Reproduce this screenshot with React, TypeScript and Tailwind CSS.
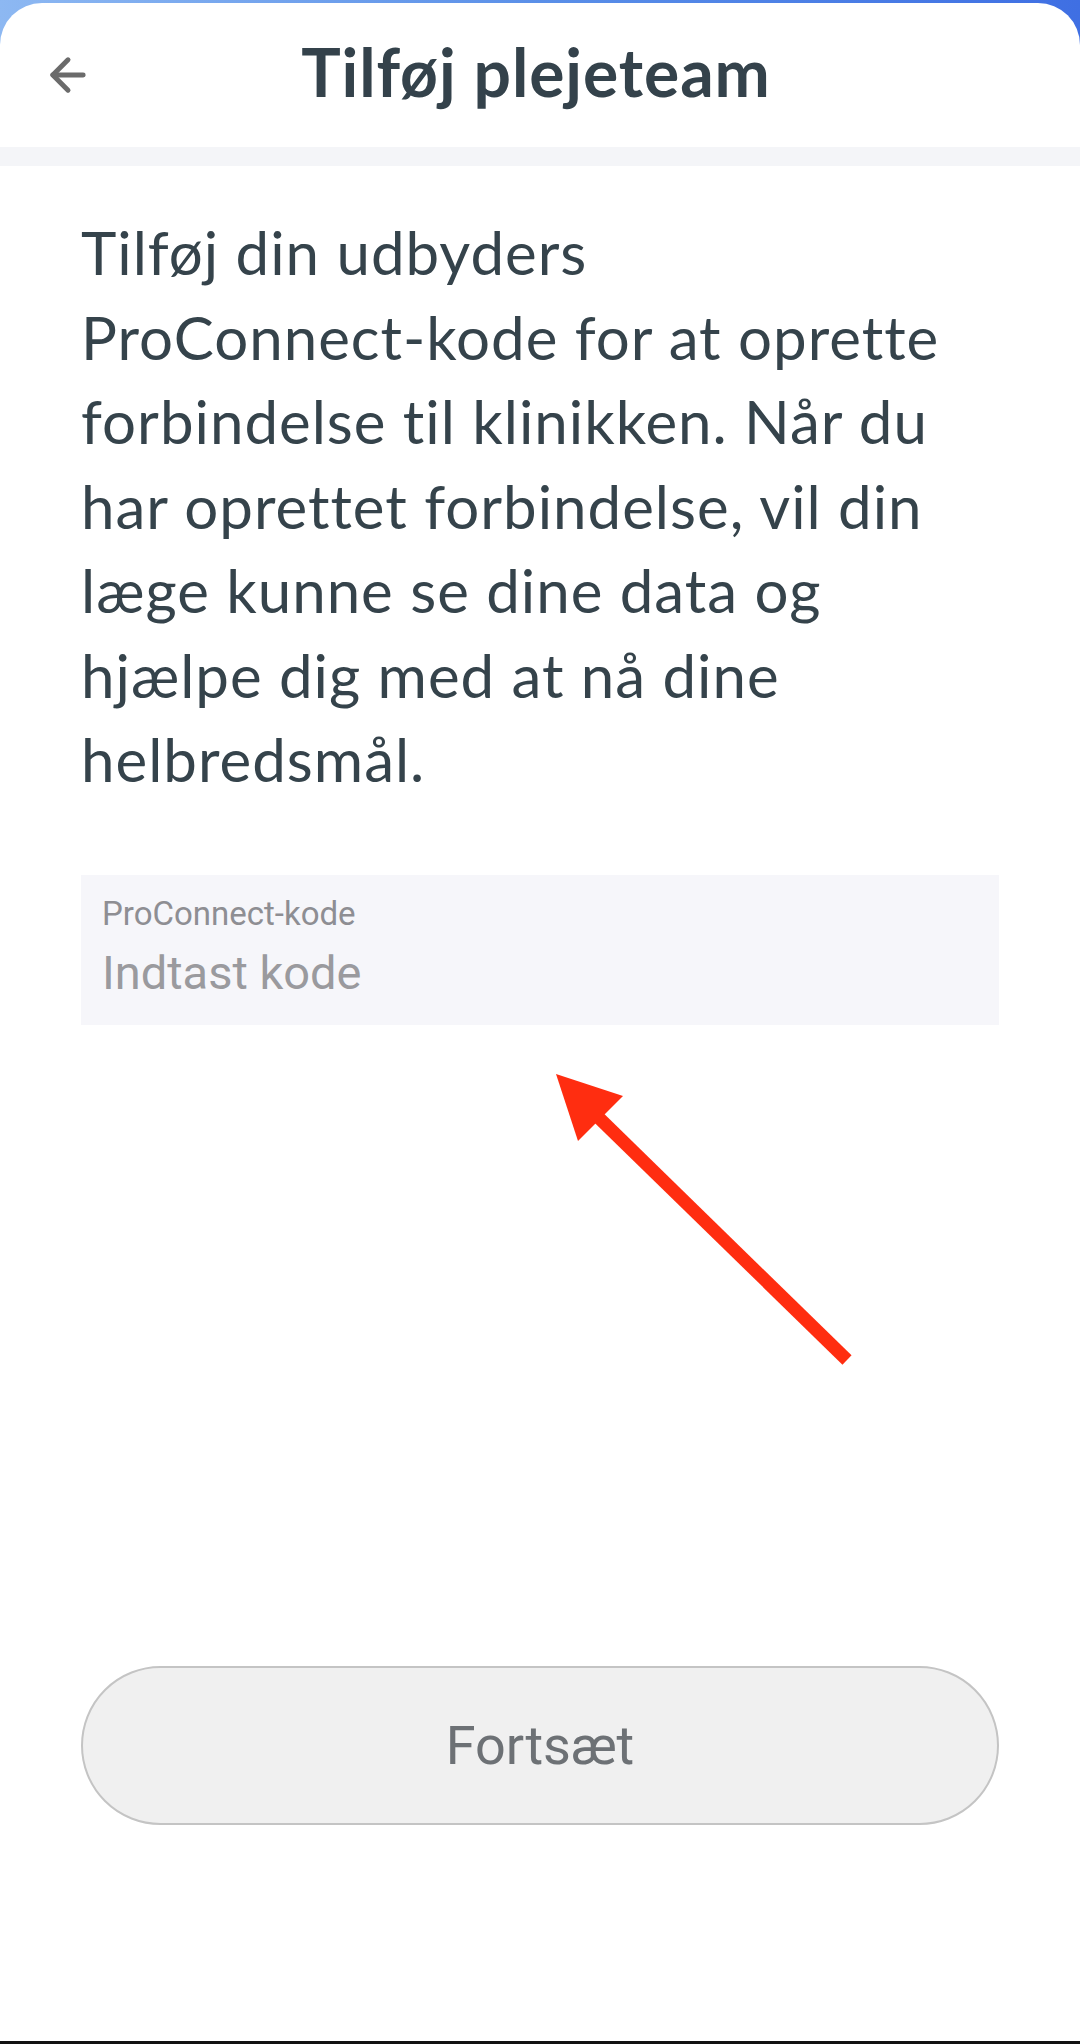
import { ArrowLeft } from 'lucide-react';

// Line breaks follow the wrapping in the screenshot
const introLines = [
  'Tilføj din udbyders',
  'ProConnect-kode for at oprette',
  'forbindelse til klinikken. Når du',
  'har oprettet forbindelse, vil din',
  'læge kunne se dine data og',
  'hjælpe dig med at nå dine',
  'helbredsmål.',
];

// Red annotation arrow pointing at the code field
const Annotation = () => (
  <svg className="absolute left-0 top-0 pointer-events-none" width="1080" height="2044" viewBox="0 0 1080 2044">
    <line x1="847" y1="1360" x2="598" y2="1117" stroke="#ff2d10" strokeWidth="13" />
    <polygon points="556,1074 623,1096 578,1141" fill="#ff2d10" />
  </svg>
);

export default function App() {
  return (
    <div className="relative h-[2044px] w-[1080px] overflow-hidden bg-gradient-to-r from-[#8db8f2] via-[#5a8fe8] to-[#3f6fe3] pt-[3px]">
      <div className="flex h-full flex-col rounded-t-[42px] bg-white font-['Lato','Nunito_Sans',sans-serif]">
        {/* Header */}
        <header className="relative flex h-[144px] items-center justify-center">
          <button className="absolute left-[42px] top-[46px] text-[#6b6b6b]">
            <ArrowLeft size={52} strokeWidth={2.3} />
          </button>
          <h1 className="mr-[8px] mt-[-8px] text-[66px] font-bold tracking-[0.9px] text-[#34424b]">Tilføj plejeteam</h1>
        </header>
        <div className="h-[19px] bg-[#f4f5f8]" />

        <main className="flex flex-1 flex-col px-[81px] pt-[44px]">
          <p className="text-[60px] leading-[84.5px] tracking-[1px] text-[#35434b]">
            {introLines.map((line) => (
              <span key={line} className="block whitespace-nowrap">
                {line}
              </span>
            ))}
          </p>

          <div className="mt-[73px] flex h-[150px] flex-col bg-[#f6f6fa] px-[21px] pt-[22px] font-['Roboto',sans-serif]">
            <span className="text-[33px] leading-[34px] text-[#8e8e93]">ProConnect-kode</span>
            <span className="mt-[14px] text-[47px] leading-[56px] text-[#9a9a9e]">Indtast kode</span>
          </div>

          <button className="mt-[641px] flex h-[159px] items-center justify-center rounded-full border-[2.5px] border-[#c4c4c4] bg-[#f0f0f0] font-['Roboto',sans-serif] text-[54px] text-[#6d7175]">
            Fortsæt
          </button>
        </main>
        <div className="mt-auto h-[3px] bg-[#111]" />
      </div>
      <Annotation />
    </div>
  );
}
